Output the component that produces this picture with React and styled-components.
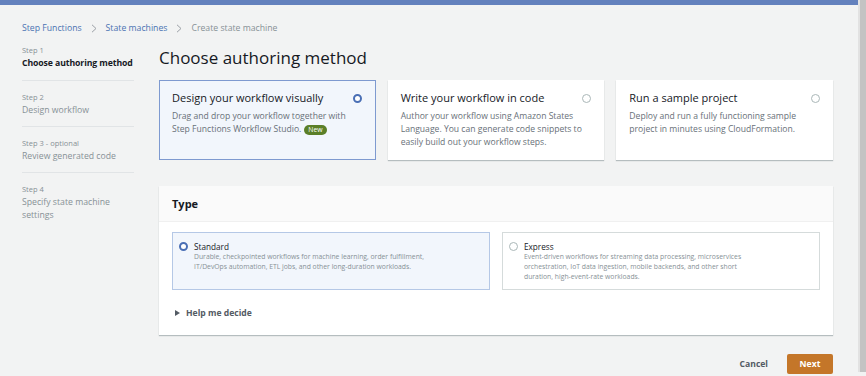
import React from "react";
import styled, { createGlobalStyle } from "styled-components";

const Global = createGlobalStyle`
  html, body { margin: 0; padding: 0; background: #f2f3f3; }
  body { font-family: "Open Sans", "Noto Sans", Arial, sans-serif; color: #16191f; }
  * { box-sizing: border-box; }
`;

const Frame = styled.div`
  display: flex;
  width: 866px;
  height: 376px;
  overflow: hidden;
  background: #f2f3f3;
`;

const Main = styled.div`
  flex: 1;
  display: flex;
  flex-direction: column;
`;

const TopBar = styled.div`
  height: 5px;
  background: #6381bd;
`;

const Scrollbar = styled.div`
  width: 8px;
  height: 372px;
  background: #c3c3c3;
  border-left: 2px solid #e2e2e2;
`;

const Content = styled.div`
  padding: 0 25px 0 22px;
  display: flex;
  flex-direction: column;
`;

const Breadcrumb = styled.nav`
  margin-top: 16px;
  display: flex;
  align-items: center;
  gap: 9px;
  height: 14px;
  font-size: 8.7px;
  line-height: 14px;
`;

const Crumb = styled.span`
  color: ${(p) => (p.$current ? "#879196" : "#4a72b2")};
`;

const Chevron = () => (
  <svg width="6" height="9" viewBox="0 0 6 9" aria-hidden="true">
    <path d="M1 0.8 L5 4.5 L1 8.2" fill="none" stroke="#9ba0a6" strokeWidth="1" />
  </svg>
);

const Layout = styled.div`
  margin-top: 10px;
  display: grid;
  grid-template-columns: 112px 1fr;
  column-gap: 25px;
`;

const Nav = styled.ol`
  list-style: none;
  margin: 0;
  padding: 0;
`;

const NavItem = styled.li`
  padding: ${(p) => (p.$first ? "0" : "11px")} 0 ${(p) => (p.$first ? "10px" : "9px")};
  border-bottom: ${(p) => (p.$last ? "none" : "1px solid #e1e4e6")};
`;

const StepLabel = styled.div`
  font-size: 7.5px;
  line-height: 11px;
  color: #879196;
`;

const StepName = styled.div`
  font-size: 8.7px;
  line-height: 13px;
  margin-top: 1px;
  color: ${(p) => (p.$active ? "#16191f" : "#879196")};
  font-weight: ${(p) => (p.$active ? 700 : 400)};
  letter-spacing: ${(p) => (p.$active ? "-0.1px" : "0")};
`;

const Column = styled.div`
  display: flex;
  flex-direction: column;
`;

const Title = styled.h1`
  margin: 0;
  font-size: 17px;
  line-height: 26px;
  font-weight: 400;
  color: #16191f;
`;

const Cards = styled.div`
  margin-top: 9px;
  display: grid;
  grid-template-columns: repeat(3, 1fr);
  gap: 12px;
`;

const Card = styled.div`
  height: 80px;
  padding: 9px 12px 0 12px;
  background: ${(p) => (p.$selected ? "#f2f6fc" : "#ffffff")};
  border: 1px solid ${(p) => (p.$selected ? "#7e9ad0" : "transparent")};
  box-shadow: ${(p) => (p.$selected ? "none" : "0 1px 1px rgba(0,28,36,0.25)")};
`;

const CardHead = styled.div`
  display: flex;
  align-items: center;
  justify-content: space-between;
`;

const CardTitle = styled.div`
  font-size: 11px;
  line-height: 16px;
  color: #16191f;
`;

const Radio = styled.span`
  width: 9px;
  height: 9px;
  border-radius: 50%;
  flex: none;
  background: #fff;
  border: ${(p) => (p.$on ? "2.5px solid #4a6fb5" : "1px solid #aab7b8")};
  margin-right: ${(p) => p.$mr || 0}px;
`;

const CardDesc = styled.div`
  margin-top: 4px;
  font-size: 8.6px;
  line-height: 13px;
  color: #687078;
`;

const Badge = styled.span`
  display: inline-block;
  background: #5b7f28;
  color: #fff;
  font-size: 6.8px;
  line-height: 10px;
  padding: 0 4px;
  border-radius: 6px;
  margin-left: 3px;
  vertical-align: middle;
`;

const Panel = styled.section`
  margin-top: 26px;
  background: #fff;
  box-shadow: 0 1px 1px rgba(0,28,36,0.25);
`;

const PanelHeader = styled.div`
  height: 36px;
  padding: 0 13px;
  display: flex;
  align-items: center;
  background: #fafafa;
  border-bottom: 1px solid #f0f0f0;
  font-size: 11px;
  font-weight: 700;
  color: #16191f;
`;

const PanelBody = styled.div`
  padding: 10px 13px 0;
`;

const Tiles = styled.div`
  display: grid;
  grid-template-columns: 1fr 1fr;
  gap: 12px;
`;

const Tile = styled.div`
  height: 58px;
  padding: 8px 6px 0 6px;
  display: flex;
  align-items: flex-start;
  gap: 6px;
  background: ${(p) => (p.$selected ? "#f2f6fc" : "#ffffff")};
  border: 1px solid ${(p) => (p.$selected ? "#b5c8e6" : "#d5dbdb")};
`;

const TileRadio = styled(Radio)`
  margin-top: 1px;
`;

const TileText = styled.div`
  display: flex;
  flex-direction: column;
  max-width: ${(p) => p.$measure}px;
`;

const TileTitle = styled.div`
  font-size: 8.2px;
  line-height: 11px;
  color: #16191f;
`;

const TileDesc = styled.div`
  font-size: 6.8px;
  line-height: 10px;
  color: #879196;
`;

const Expander = styled.div`
  height: 45px;
  display: flex;
  align-items: center;
  gap: 6px;
  padding-left: 3px;
  font-size: 8.6px;
  font-weight: 700;
  color: #545b64;
`;

const Caret = styled.span`
  width: 0;
  height: 0;
  border-top: 3.5px solid transparent;
  border-bottom: 3.5px solid transparent;
  border-left: 5px solid #545b64;
`;

const Footer = styled.div`
  margin-top: 19px;
  display: flex;
  justify-content: flex-end;
  align-items: center;
  gap: 19px;
`;

const LinkButton = styled.button`
  background: none;
  border: none;
  padding: 0;
  font-family: inherit;
  font-size: 8.6px;
  font-weight: 700;
  color: #545b64;
`;

const PrimaryButton = styled.button`
  width: 46px;
  height: 20px;
  border: none;
  border-radius: 2px;
  background: #c47629;
  color: #fff;
  font-family: inherit;
  font-size: 8.6px;
  font-weight: 700;
`;

const steps = [
  { label: "Step 1", name: "Choose authoring method", active: true },
  { label: "Step 2", name: "Design workflow" },
  { label: "Step 3 - optional", name: "Review generated code" },
  { label: "Step 4", name: "Specify state machine settings" },
];

const types = [
  {
    name: "Standard",
    selected: true,
    measure: 256,
    desc: "Durable, checkpointed workflows for machine learning, order fulfillment, IT/DevOps automation, ETL jobs, and other long-duration workloads.",
  },
  {
    name: "Express",
    measure: 240,
    desc: "Event-driven workflows for streaming data processing, microservices orchestration, IoT data ingestion, mobile backends, and other short duration, high-event-rate workloads.",
  },
];

export default function App() {
  return (
    <>
      <Global />
      <Frame>
        <Main>
          <TopBar />
          <Content>
            <Breadcrumb>
              <Crumb>Step Functions</Crumb>
              <Chevron />
              <Crumb>State machines</Crumb>
              <Chevron />
              <Crumb $current>Create state machine</Crumb>
            </Breadcrumb>
            <Layout>
              <Nav>
                {steps.map((s, i) => (
                  <NavItem key={s.label} $first={i === 0} $last={i === steps.length - 1}>
                    <StepLabel>{s.label}</StepLabel>
                    <StepName $active={s.active}>{s.name}</StepName>
                  </NavItem>
                ))}
              </Nav>
              <Column>
                <Title>Choose authoring method</Title>
                <Cards>
                  <Card $selected>
                    <CardHead>
                      <CardTitle>Design your workflow visually</CardTitle>
                      <Radio $on $mr={1} />
                    </CardHead>
                    <CardDesc>
                      Drag and drop your workflow together with Step Functions Workflow Studio.
                      <Badge>New</Badge>
                    </CardDesc>
                  </Card>
                  <Card>
                    <CardHead>
                      <CardTitle>Write your workflow in code</CardTitle>
                      <Radio $mr={0} />
                    </CardHead>
                    <CardDesc>
                      Author your workflow using Amazon States Language. You can generate code snippets to easily build out your workflow steps.
                    </CardDesc>
                  </Card>
                  <Card>
                    <CardHead>
                      <CardTitle>Run a sample project</CardTitle>
                      <Radio $mr={0} />
                    </CardHead>
                    <CardDesc>
                      Deploy and run a fully functioning sample project in minutes using CloudFormation.
                    </CardDesc>
                  </Card>
                </Cards>
                <Panel>
                  <PanelHeader>Type</PanelHeader>
                  <PanelBody>
                    <Tiles>
                      {types.map((t) => (
                        <Tile key={t.name} $selected={t.selected}>
                          <TileRadio $on={t.selected} />
                          <TileText $measure={t.measure}>
                            <TileTitle>{t.name}</TileTitle>
                            <TileDesc>{t.desc}</TileDesc>
                          </TileText>
                        </Tile>
                      ))}
                    </Tiles>
                    <Expander>
                      <Caret />
                      Help me decide
                    </Expander>
                  </PanelBody>
                </Panel>
                <Footer>
                  <LinkButton>Cancel</LinkButton>
                  <PrimaryButton>Next</PrimaryButton>
                </Footer>
              </Column>
            </Layout>
          </Content>
        </Main>
        <Scrollbar />
      </Frame>
    </>
  );
}
